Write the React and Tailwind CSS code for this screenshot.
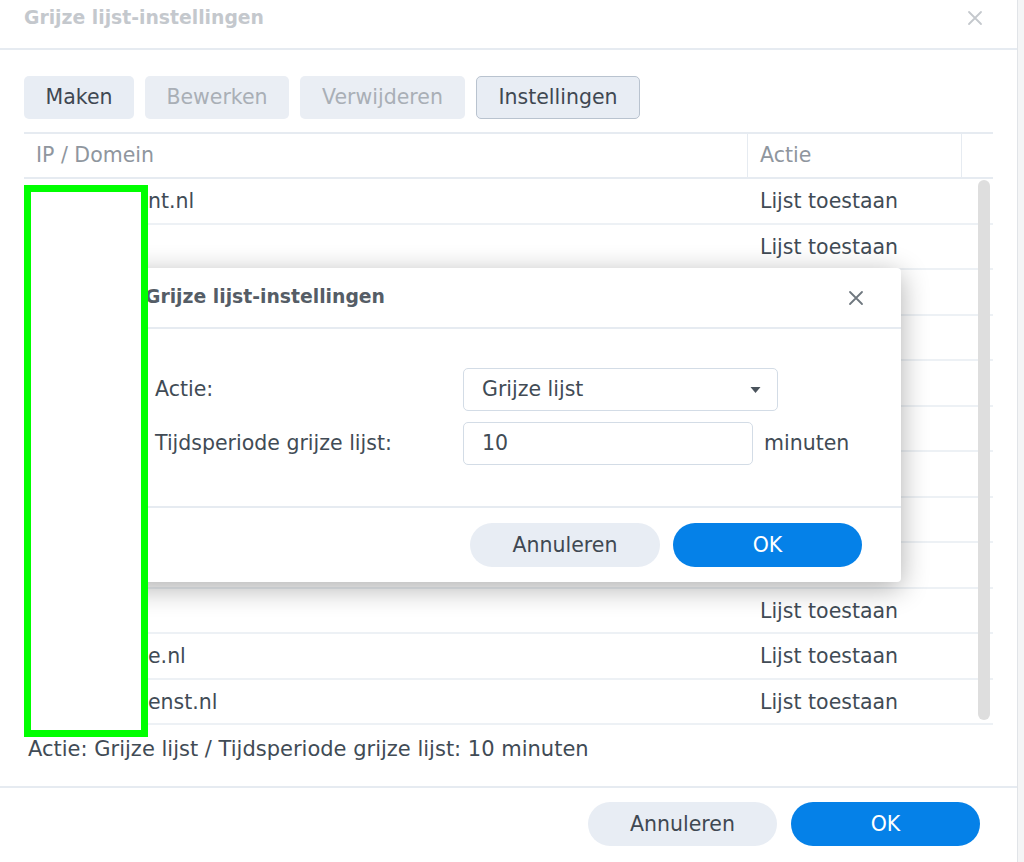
const rows = [
  { visible: "nt.nl" },
  { visible: "" },
  { visible: "" },
  { visible: "" },
  { visible: "" },
  { visible: "" },
  { visible: "" },
  { visible: "" },
  { visible: "" },
  { visible: "" },
  { visible: "e.nl" },
  { visible: "enst.nl" },
];

function CloseIcon({ className }) {
  return (
    <svg viewBox="0 0 16 16" className={className} fill="none" stroke="currentColor" strokeWidth="1.8" strokeLinecap="round">
      <path d="M2 2 L14 14 M14 2 L2 14" />
    </svg>
  );
}

export default function App() {
  return (
    <div className="relative flex h-[862px] w-[1024px] overflow-hidden bg-[#f4f5f6] font-['DejaVu_Sans',sans-serif] text-[#414b55]">
      <div className="flex w-[1018px] flex-col border-r border-[#e1e4e8] bg-white">
        {/* outer header */}
        <div className="flex h-[50px] items-start justify-between border-b-2 border-[#e6ebf1] pl-6 pr-[34px] pt-[6px]">
          <div className="text-[18.8px] font-bold leading-6 text-[#c4c8cd]">Grijze lijst-instellingen</div>
          <CloseIcon className="mt-[4px] h-[16px] w-[16px] text-[#c4c8cd]" />
        </div>

        {/* toolbar */}
        <div className="flex gap-[11px] px-6 pt-[26px] text-[20.5px]">
          <button className="h-[43px] w-[110px] rounded-[5px] bg-[#e8edf4] text-[#3f4852]">Maken</button>
          <button className="h-[43px] w-[144px] rounded-[5px] bg-[#eaeef4] text-[#a9afb6]">Bewerken</button>
          <button className="h-[43px] w-[165px] rounded-[5px] bg-[#eaeef4] text-[#a9afb6]">Verwijderen</button>
          <button className="h-[43px] w-[164px] rounded-[5px] border border-[#b9c3cf] bg-[#e8edf4] text-[#3f4852]">Instellingen</button>
        </div>

        {/* table */}
        <div className="relative mx-6 mt-[13px] text-[20.5px]">
          <div className="flex h-[47px] border-y-2 border-[#e6ebf1] text-[#8f969e]">
            <div className="flex w-[723px] items-center pl-3">IP / Domein</div>
            <div className="flex w-[215px] items-center border-x border-[#e6ebf1] pl-3">Actie</div>
            <div className="flex-1" />
          </div>
          {rows.map((r, i) => (
            <div key={i} className="flex h-[45.5px] items-center border-b-2 border-[#edf1f5] pt-[2px]">
              <div className="flex w-[723px] whitespace-nowrap pl-3">
                <span className="w-[112px] shrink-0" />
                {r.visible}
              </div>
              <div className="w-[215px] pl-[13px]">Lijst toestaan</div>
            </div>
          ))}
          <div className="absolute right-[3px] top-[48px] h-[540px] w-[12px] rounded-full bg-[#dedede]" />
        </div>

        <div className="mt-[11px] pl-[28px] text-[21px] leading-[26px]">
          Actie: Grijze lijst / Tijdsperiode grijze lijst: 10 minuten
        </div>

        {/* outer footer */}
        <div className="mt-[24px] flex justify-end gap-[14px] border-t-2 border-[#e6ebf1] pr-[37px] pt-[14px] text-[20.5px]">
          <button className="h-[44px] w-[189px] rounded-full bg-[#e8edf4] text-[#3f4852]">Annuleren</button>
          <button className="h-[44px] w-[189px] rounded-full bg-[#0581e8] text-white">OK</button>
        </div>
      </div>

      {/* inner dialog */}
      <div className="absolute left-[122px] top-[268px] flex h-[314px] w-[779px] flex-col rounded-[4px] bg-white shadow-[0_6px_28px_rgba(0,0,0,0.32)]">
        <div className="flex h-[61px] items-center justify-between border-b-2 border-[#e6ebf1] pl-[23px] pr-[37px]">
          <div className="text-[18.8px] font-bold text-[#555d66]">Grijze lijst-instellingen</div>
          <CloseIcon className="h-[16px] w-[16px] text-[#6f777f]" />
        </div>
        <div className="flex flex-1 flex-col gap-[11px] pt-[39px] text-[20.5px]">
          <div className="flex items-center">
            <div className="w-[341px] pl-[33px]">Actie:</div>
            <div className="flex h-[43px] w-[315px] items-center justify-between rounded-[5px] border border-[#d3dce6] pl-[18px] pr-[16px]">
              <span>Grijze lijst</span>
              <svg viewBox="0 0 10 6" className="h-[6px] w-[11px]" fill="#4a535c">
                <path d="M0 0 L10 0 L5 6 Z" />
              </svg>
            </div>
          </div>
          <div className="flex items-center">
            <div className="w-[341px] pl-[33px]">Tijdsperiode grijze lijst:</div>
            <div className="flex h-[43px] w-[290px] items-center rounded-[5px] border border-[#d3dce6] pl-[18px]">10</div>
            <div className="ml-[11px]">minuten</div>
          </div>
        </div>
        <div className="flex h-[76px] justify-end gap-[13px] border-t-2 border-[#e6ebf1] pr-[39px] pt-[15px] text-[20.5px]">
          <button className="h-[44px] w-[190px] rounded-full bg-[#e8edf4] text-[#3f4852]">Annuleren</button>
          <button className="h-[44px] w-[189px] rounded-full bg-[#0581e8] text-white">OK</button>
        </div>
      </div>

      {/* redaction box */}
      <div className="absolute left-[24px] top-[185px] h-[552px] w-[124px] border-[7px] border-[#00ff00] bg-white" />
    </div>
  );
}
